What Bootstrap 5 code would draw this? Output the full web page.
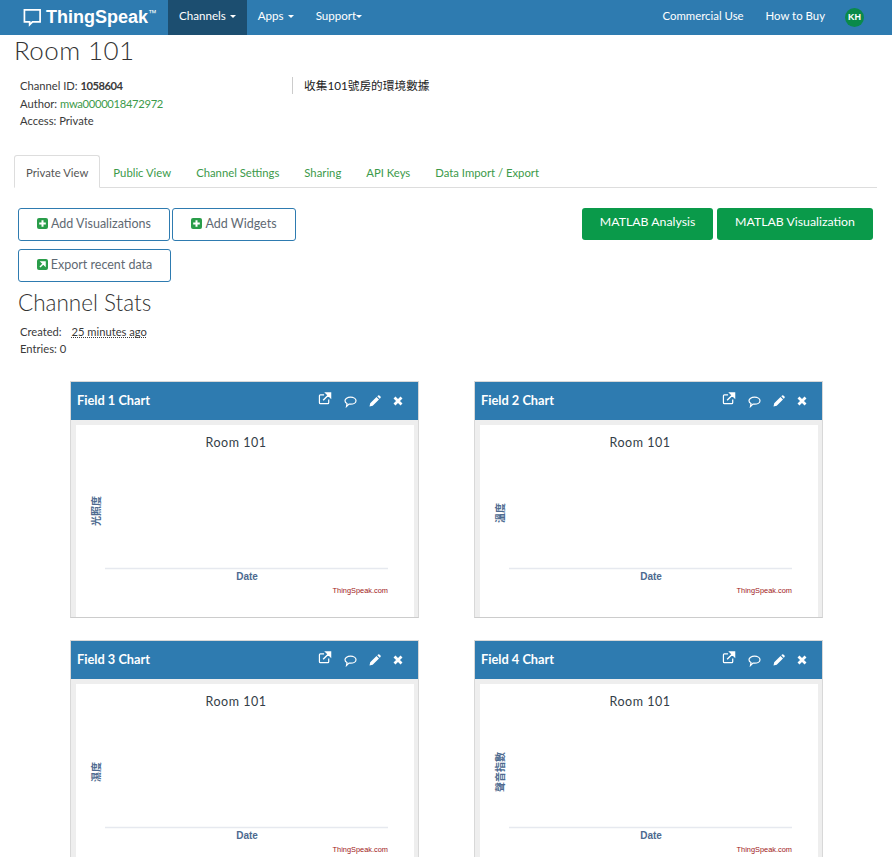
<!DOCTYPE html>
<html lang="en">
<head>
<meta charset="utf-8">
<title>Room 101 - ThingSpeak</title>
<link href="https://cdn.jsdelivr.net/npm/bootstrap@5.3.0/dist/css/bootstrap.min.css" rel="stylesheet">
<style>
html,body{height:857px;overflow:hidden}
body{font-family:"Lato","Noto Sans CJK TC",sans-serif;font-size:11.2px;color:#3a3a3a;background:#fff}
.ts-bar{background:#2e7bb0;height:35px;padding:0}
.ts-brand{color:#fff;font-family:"Liberation Sans",sans-serif;font-weight:700;font-size:18px;width:168px;padding:0 0 1px 23px;height:35px;text-decoration:none}
.ts-brand sup{font-size:8.5px;font-weight:400;top:-.75em;letter-spacing:0}
.ts-link{color:#fff;font-size:11.6px;height:35px;padding:0 11px 4px;text-decoration:none}
.ts-right{font-size:11.4px}
.ts-active{background:#1c4e70}
.ts-caret{border-top:3px solid #fff;border-left:3px solid transparent;border-right:3px solid transparent;width:0;height:0;margin-left:4px;margin-top:1px}
.ts-avatar{width:19px;height:19px;border-radius:50%;background:#0a8a4a;color:#fff;font-size:9px;font-weight:700;margin:0 28px 0 9px;font-family:"Liberation Sans",sans-serif}
.ts-page{padding:0 14px}
.ts-title{font-family:"Lato",sans-serif;font-weight:300;font-size:26px;line-height:34px;margin:-2px 0 0;color:#333;letter-spacing:.4px}
.ts-info{padding:0 6px;margin-top:10px;height:78px}
.ts-meta{width:272px;line-height:17.5px}
.ts-meta a{letter-spacing:-.3px}
.ts-meta strong{letter-spacing:-.5px}
.ts-meta a,.ts-tabs .nav-link{color:#3c9a4a;text-decoration:none}
.ts-desc{border-left:1px solid #ccc;padding-left:11px;height:17px;line-height:17px;margin-top:0;font-size:11.7px;color:#222}
.ts-tabs{width:863px;border-color:#ddd}
.ts-tabs .nav-link{font-size:11.3px;padding:0 11px;height:33px;line-height:34px;margin-right:1px;border-radius:3px 3px 0 0}
.ts-tabs .nav-link.active{color:#555;border-color:#ddd #ddd #fff}
.ts-actions{margin:20px 5px 0 4px}
.ts-btn{font-size:12.5px;font-weight:400;color:#5f6a73;border:1px solid #2e7bb0;border-radius:3px;height:33px;padding:0 0 1px;background:#fff}
.ts-btn svg{vertical-align:-1px;margin-right:3px}
.ts-w1{width:152px}.ts-w2{width:124px;margin-left:2px}.ts-w3{width:153px;margin-top:8px;display:block}
.ts-green{font-size:12.3px;background:#0a9a4a;color:#fff;border-radius:3px;border:0;height:32px;padding:0 0 3px}
.ts-g1{width:131px}.ts-g2{width:156px;margin-left:4px}
.ts-h2{font-family:"Lato",sans-serif;font-weight:300;font-size:22.500px;line-height:26px;margin:8px 0 0 4px;color:#333}
.ts-stats{margin:8px 0 0 6px;line-height:16.5px}
.ts-stats abbr{text-decoration:underline dotted;margin-left:7px;cursor:help}
.ts-grid{display:grid;grid-template-columns:349px 349px;column-gap:55px;row-gap:22px;margin:24px 0 0 56px}
.ts-card{border:1px solid #d8d8d8;border-bottom-color:#ccc;background:#eee;border-radius:0;height:237px;overflow:hidden}
.ts-head{background:#2e7bb0;color:#fff;height:38px;flex-shrink:0;padding:0 15px 0 6px;border-radius:0;font-weight:700;font-size:12.8px}
.ts-tools{gap:12px}
.ts-ic1{margin-bottom:6px}
.ts-ic2{margin-top:2px}
.ts-body{background:#fff;margin:5px 4px 0 5px;height:210px;flex-shrink:0}
.ts-chart{display:block}
.ts-chart .t1{font-family:"Lato",sans-serif;font-size:12.5px;fill:#333e48;letter-spacing:.5px}
.ts-chart .t2{font-family:"Liberation Sans",sans-serif;font-size:10px;font-weight:700;fill:#4d6a8f}
.ts-chart .t3{font-family:"Noto Sans CJK TC",sans-serif;font-size:10px;font-weight:700;fill:#4d6a8f}
.ts-chart .t4{font-family:"Liberation Sans",sans-serif;font-size:7.4px;fill:#a01818}
</style>
</head>
<body>
<nav class="ts-bar d-flex align-items-center">
  <a class="ts-brand d-flex align-items-center" href="#">
    <svg width="19" height="19" viewBox="0 0 20 20" class="me-1 flex-shrink-0"><path d="M1.500 2h16.500v12.500h-8l-3 3v-3h-5.500z" fill="none" stroke="#fff" stroke-width="1.800"/></svg>
    <span>ThingSpeak<sup>™</sup></span>
  </a>
  <a class="ts-link ts-active d-flex align-items-center" href="#">Channels<span class="ts-caret"></span></a>
  <a class="ts-link d-flex align-items-center" href="#">Apps<span class="ts-caret"></span></a>
  <a class="ts-link d-flex align-items-center" href="#">Support<span class="ts-caret ms-0"></span></a>
  <div class="ms-auto d-flex align-items-center">
    <a class="ts-link ts-right d-flex align-items-center" href="#">Commercial Use</a>
    <a class="ts-link ts-right d-flex align-items-center" href="#">How to Buy</a>
    <span class="ts-avatar d-flex align-items-center justify-content-center">KH</span>
  </div>
</nav>
<main class="ts-page">
  <h1 class="ts-title">Room 101</h1>
  <div class="ts-info d-flex">
    <div class="ts-meta">
      <div>Channel ID: <strong>1058604</strong></div>
      <div>Author: <a href="#">mwa0000018472972</a></div>
      <div>Access: Private</div>
    </div>
    <div class="ts-desc">收集101號房的環境數據</div>
  </div>
  <ul class="nav nav-tabs ts-tabs">
    <li class="nav-item"><a class="nav-link active" href="#">Private View</a></li>
    <li class="nav-item"><a class="nav-link" href="#">Public View</a></li>
    <li class="nav-item"><a class="nav-link" href="#">Channel Settings</a></li>
    <li class="nav-item"><a class="nav-link" href="#">Sharing</a></li>
    <li class="nav-item"><a class="nav-link" href="#">API Keys</a></li>
    <li class="nav-item"><a class="nav-link" href="#">Data Import / Export</a></li>
  </ul>
  <div class="ts-actions d-flex justify-content-between align-items-start">
    <div>
      <button class="btn ts-btn ts-w1"><svg width="11" height="11" viewBox="0 0 11 11"><rect width="11" height="11" rx="2" fill="#2a9d4a"/><path d="M5.500 2.200v6.600M2.200 5.500h6.600" stroke="#fff" stroke-width="2"/></svg>Add Visualizations</button><button class="btn ts-btn ts-w2"><svg width="11" height="11" viewBox="0 0 11 11"><rect width="11" height="11" rx="2" fill="#2a9d4a"/><path d="M5.500 2.200v6.600M2.200 5.500h6.600" stroke="#fff" stroke-width="2"/></svg>Add Widgets</button>
      <button class="btn ts-btn ts-w3"><svg width="11" height="11" viewBox="0 0 11 11"><rect width="11" height="11" rx="2" fill="#2a9d4a"/><path d="M3 8l4-4M4.500 3h3.500v3.500z" stroke="#fff" stroke-width="1.500" fill="#fff"/></svg>Export recent data</button>
    </div>
    <div class="d-flex">
      <button class="btn ts-green ts-g1">MATLAB Analysis</button>
      <button class="btn ts-green ts-g2">MATLAB Visualization</button>
    </div>
  </div>
  <h2 class="ts-h2">Channel Stats</h2>
  <div class="ts-stats">
    <div>Created: <abbr title="date">25 minutes ago</abbr></div>
    <div>Entries: 0</div>
  </div>
  <div class="ts-grid">
    <section class="ts-card card">
      <div class="ts-head d-flex align-items-center justify-content-between"><span>Field 1 Chart</span>
        <span class="ts-tools d-flex align-items-center">
          <svg class="ts-ic1" width="14" height="13" viewBox="0 0 14 14"><path d="M11 8v3.500a1 1 0 0 1-1 1H2a1 1 0 0 1-1-1V4a1 1 0 0 1 1-1h4" fill="none" stroke="#fff" stroke-width="1.300"/><path d="M5 9l6-6M8 1h5v5z" stroke="#fff" stroke-width="1.500" fill="#fff"/></svg>
          <svg class="ts-ic2" width="13" height="12" viewBox="0 0 13 12"><path d="M6.500 1.200c3 0 5.500 1.500 5.500 3.500s-2.500 3.500-5.500 3.500c-.6 0-1 0-1.500-.1L2.500 10.500l.5-3C1.700 6.900 1 5.900 1 4.700c0-2 2.500-3.500 5.500-3.500z" fill="none" stroke="#fff" stroke-width="1.200"/></svg>
          <svg width="12" height="12" viewBox="0 0 12 12"><path d="M0.500 11.500l.7-3.200 6.300-6.300 2.500 2.500-6.300 6.300zM8.300 1.200l.8-.7a1 1 0 0 1 1.300 0l1.100 1.100a1 1 0 0 1 0 1.300l-.8.8z" fill="#fff"/></svg>
          <svg width="10" height="10" viewBox="0 0 10 10"><path d="M1.500 1.500l7 7M8.500 1.500l-7 7" stroke="#fff" stroke-width="2.800"/></svg>
        </span>
      </div>
      <div class="ts-body">
        <svg class="ts-chart" width="338" height="195" viewBox="0 0 338 195">
          <text class="t1" x="160" y="22" text-anchor="middle">Room 101</text>
          <text class="t3" transform="translate(24 86) rotate(-90)" text-anchor="middle">光照度</text>
          <line x1="29" x2="312" y1="143.500" y2="143.500" stroke="#e6e9ef" stroke-width="1.500"/>
          <text class="t2" x="171" y="155" text-anchor="middle">Date</text>
          <text class="t4" x="312" y="168" text-anchor="end">ThingSpeak.com</text>
        </svg>
      </div>
    </section>
    <section class="ts-card card">
      <div class="ts-head d-flex align-items-center justify-content-between"><span>Field 2 Chart</span>
        <span class="ts-tools d-flex align-items-center">
          <svg class="ts-ic1" width="14" height="13" viewBox="0 0 14 14"><path d="M11 8v3.500a1 1 0 0 1-1 1H2a1 1 0 0 1-1-1V4a1 1 0 0 1 1-1h4" fill="none" stroke="#fff" stroke-width="1.300"/><path d="M5 9l6-6M8 1h5v5z" stroke="#fff" stroke-width="1.500" fill="#fff"/></svg>
          <svg class="ts-ic2" width="13" height="12" viewBox="0 0 13 12"><path d="M6.500 1.200c3 0 5.500 1.500 5.500 3.500s-2.500 3.500-5.500 3.500c-.6 0-1 0-1.500-.1L2.500 10.500l.5-3C1.700 6.900 1 5.900 1 4.700c0-2 2.500-3.500 5.500-3.500z" fill="none" stroke="#fff" stroke-width="1.200"/></svg>
          <svg width="12" height="12" viewBox="0 0 12 12"><path d="M0.500 11.500l.7-3.200 6.300-6.300 2.500 2.500-6.300 6.300zM8.300 1.200l.8-.7a1 1 0 0 1 1.300 0l1.100 1.100a1 1 0 0 1 0 1.300l-.8.8z" fill="#fff"/></svg>
          <svg width="10" height="10" viewBox="0 0 10 10"><path d="M1.500 1.500l7 7M8.500 1.500l-7 7" stroke="#fff" stroke-width="2.800"/></svg>
        </span>
      </div>
      <div class="ts-body">
        <svg class="ts-chart" width="338" height="195" viewBox="0 0 338 195">
          <text class="t1" x="160" y="22" text-anchor="middle">Room 101</text>
          <text class="t3" transform="translate(24 88) rotate(-90)" text-anchor="middle">溫度</text>
          <line x1="29" x2="312" y1="143.500" y2="143.500" stroke="#e6e9ef" stroke-width="1.500"/>
          <text class="t2" x="171" y="155" text-anchor="middle">Date</text>
          <text class="t4" x="312" y="168" text-anchor="end">ThingSpeak.com</text>
        </svg>
      </div>
    </section>
    <section class="ts-card card">
      <div class="ts-head d-flex align-items-center justify-content-between"><span>Field 3 Chart</span>
        <span class="ts-tools d-flex align-items-center">
          <svg class="ts-ic1" width="14" height="13" viewBox="0 0 14 14"><path d="M11 8v3.500a1 1 0 0 1-1 1H2a1 1 0 0 1-1-1V4a1 1 0 0 1 1-1h4" fill="none" stroke="#fff" stroke-width="1.300"/><path d="M5 9l6-6M8 1h5v5z" stroke="#fff" stroke-width="1.500" fill="#fff"/></svg>
          <svg class="ts-ic2" width="13" height="12" viewBox="0 0 13 12"><path d="M6.500 1.200c3 0 5.500 1.500 5.500 3.500s-2.500 3.500-5.500 3.500c-.6 0-1 0-1.500-.1L2.500 10.500l.5-3C1.700 6.900 1 5.900 1 4.700c0-2 2.500-3.500 5.500-3.500z" fill="none" stroke="#fff" stroke-width="1.200"/></svg>
          <svg width="12" height="12" viewBox="0 0 12 12"><path d="M0.500 11.500l.7-3.200 6.300-6.300 2.500 2.500-6.300 6.300zM8.300 1.200l.8-.7a1 1 0 0 1 1.300 0l1.100 1.100a1 1 0 0 1 0 1.300l-.8.8z" fill="#fff"/></svg>
          <svg width="10" height="10" viewBox="0 0 10 10"><path d="M1.500 1.500l7 7M8.500 1.500l-7 7" stroke="#fff" stroke-width="2.800"/></svg>
        </span>
      </div>
      <div class="ts-body">
        <svg class="ts-chart" width="338" height="195" viewBox="0 0 338 195">
          <text class="t1" x="160" y="22" text-anchor="middle">Room 101</text>
          <text class="t3" transform="translate(24 88) rotate(-90)" text-anchor="middle">濕度</text>
          <line x1="29" x2="312" y1="143.500" y2="143.500" stroke="#e6e9ef" stroke-width="1.500"/>
          <text class="t2" x="171" y="155" text-anchor="middle">Date</text>
          <text class="t4" x="312" y="168" text-anchor="end">ThingSpeak.com</text>
        </svg>
      </div>
    </section>
    <section class="ts-card card">
      <div class="ts-head d-flex align-items-center justify-content-between"><span>Field 4 Chart</span>
        <span class="ts-tools d-flex align-items-center">
          <svg class="ts-ic1" width="14" height="13" viewBox="0 0 14 14"><path d="M11 8v3.500a1 1 0 0 1-1 1H2a1 1 0 0 1-1-1V4a1 1 0 0 1 1-1h4" fill="none" stroke="#fff" stroke-width="1.300"/><path d="M5 9l6-6M8 1h5v5z" stroke="#fff" stroke-width="1.500" fill="#fff"/></svg>
          <svg class="ts-ic2" width="13" height="12" viewBox="0 0 13 12"><path d="M6.500 1.200c3 0 5.500 1.500 5.500 3.500s-2.500 3.500-5.500 3.500c-.6 0-1 0-1.500-.1L2.500 10.500l.5-3C1.700 6.900 1 5.900 1 4.700c0-2 2.500-3.500 5.500-3.500z" fill="none" stroke="#fff" stroke-width="1.200"/></svg>
          <svg width="12" height="12" viewBox="0 0 12 12"><path d="M0.500 11.500l.7-3.200 6.300-6.300 2.500 2.500-6.300 6.300zM8.300 1.200l.8-.7a1 1 0 0 1 1.300 0l1.100 1.100a1 1 0 0 1 0 1.300l-.8.8z" fill="#fff"/></svg>
          <svg width="10" height="10" viewBox="0 0 10 10"><path d="M1.500 1.500l7 7M8.500 1.500l-7 7" stroke="#fff" stroke-width="2.800"/></svg>
        </span>
      </div>
      <div class="ts-body">
        <svg class="ts-chart" width="338" height="195" viewBox="0 0 338 195">
          <text class="t1" x="160" y="22" text-anchor="middle">Room 101</text>
          <text class="t3" transform="translate(24 88) rotate(-90)" text-anchor="middle">聲音指數</text>
          <line x1="29" x2="312" y1="143.500" y2="143.500" stroke="#e6e9ef" stroke-width="1.500"/>
          <text class="t2" x="171" y="155" text-anchor="middle">Date</text>
          <text class="t4" x="312" y="168" text-anchor="end">ThingSpeak.com</text>
        </svg>
      </div>
    </section>
  </div>
</main>
</body>
</html>
